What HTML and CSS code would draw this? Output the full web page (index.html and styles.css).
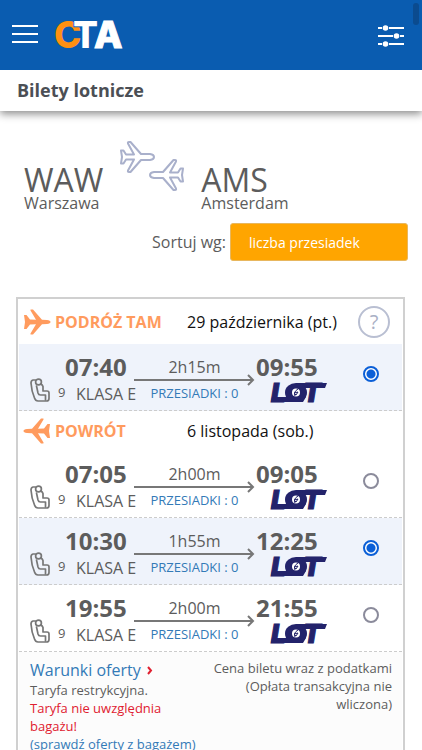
FILE: index.html
```html
<!DOCTYPE html>
<html lang="pl">
<head>
<meta charset="utf-8">
<meta name="viewport" content="width=device-width, initial-scale=1">
<title>Bilety lotnicze</title>
<link rel="stylesheet" href="styles.css">
</head>
<body>
<svg class="sprite" aria-hidden="true">
  <symbol id="plane-outline" viewBox="0 0 36 32">
    <path d="M2 9.500h2.500l2.500 4h8L9 2.500Q8.500 1 10 1h1.500L22 13h9q4 .5 4 3t-4 3h-9L11.500 31H10q-1.500 0-1-1.500L15 18.500H7l-2.500 4H2L3 16z" fill="none" stroke="#a9b0cb" stroke-width="2" stroke-linejoin="round"/>
  </symbol>
  <symbol id="plane-solid" viewBox="0 0 28 26">
    <path d="M1 6h2.500L7 10.500l6 .3L7.500 1.500Q7 .5 8 .5h2L19 10.800l5 .2q3.500.5 3.500 2T24 15l-5 .2L10 25.500H8q-1 0-.5-1L13 15.200l-6 .3L3.500 20H1l1-7z" fill="#ff9b5e"/>
  </symbol>
  <symbol id="seat" viewBox="0 0 20 24">
    <g fill="none" stroke="#777" stroke-width="1.700" stroke-linejoin="round" stroke-linecap="round">
      <path d="M5.500 2H3Q1 2.500 1 5q.5 8 3.500 15 1 3 3.500 3h8.500q2.500 0 2.500-2.500V15q0-2-2-2h-4V8.500Q12.500 7 11 6"/>
      <circle cx="8.500" cy="4" r="2.900"/>
      <path d="M6.500 8 8 15q.5 2 2.500 2h5v5"/>
    </g>
  </symbol>
</svg>

<header class="topbar">
  <button class="icon-button" type="button" aria-label="Menu">
    <svg width="28" height="20" viewBox="0 0 28 20"><path d="M1 2h26M1 10h26M1 18h26" stroke="#fff" stroke-width="2"/></svg>
  </button>
  <a class="brand" href="#" aria-label="CTA">
    <svg width="72" height="48" viewBox="0 0 72 48" font-family="Inter, sans-serif" font-weight="800" font-size="37">
      <text x="-1" y="38" fill="#ff9012">C</text>
      <text x="18" y="38" fill="#fff" stroke="#0a5cb0" stroke-width="2" paint-order="stroke">T</text>
      <text x="39" y="38" fill="#fff" stroke="#fff" stroke-width="1">A</text>
    </svg>
  </a>
  <button class="icon-button filters" type="button" aria-label="Filtry">
    <svg width="28" height="22" viewBox="0 0 28 22" fill="#fff" stroke="#fff" stroke-width="2">
      <path d="M1 3h4m7 0h15M1 11h15m7 0h4M1 19h4m7 0h15"/>
      <circle cx="8.500" cy="3" r="1.800"/><circle cx="19.500" cy="11" r="1.800"/><circle cx="8.500" cy="19" r="1.800"/>
    </svg>
  </button>
  <span class="scroll-thumb"></span>
</header>
<h1 class="page-title">Bilety lotnicze</h1>

<main>
  <section class="route">
    <div class="airport"><span class="code">WAW</span><span class="city">Warszawa</span></div>
    <svg class="route-planes" width="66" height="50" viewBox="0 0 66 50" aria-hidden="true">
      <use href="#plane-outline" x="0" y="0" width="36" height="32"/>
      <use href="#plane-outline" x="0" y="0" width="36" height="32" transform="translate(66 18) scale(-1 1)"/>
    </svg>
    <div class="airport"><span class="code">AMS</span><span class="city">Amsterdam</span></div>
  </section>

  <div class="sort">
    <label for="sort">Sortuj wg:</label>
    <select id="sort"><option>liczba przesiadek</option></select>
  </div>

  <section class="offer">
    <div class="leg-head outbound">
      <svg class="plane" width="28" height="26" aria-hidden="true"><use href="#plane-solid"/></svg>
      <h2>PODRÓŻ TAM</h2>
      <span class="date">29 października (pt.)</span>
      <button class="help" type="button" aria-label="Pomoc">?</button>
    </div>
    <label class="flight selected">
      <span class="depart"><b class="time">07:40</b><svg class="seat" width="20" height="24"><use href="#seat"/></svg><span class="seats">9</span><span class="class">KLASA E</span></span>
      <span class="duration"><span class="length">2h15m</span><svg class="arrow" viewBox="0 0 121 12" height="12"><path d="M0 6h119M114 1l5 5-5 5"/></svg><span class="stops">PRZESIADKI : 0</span></span>
      <span class="arrive"><b class="time">09:55</b><svg class="lot" width="58" height="22" viewBox="0 0 58 22" role="img" aria-label="LOT"><text x="1" y="20">L</text><text x="33" y="20">T</text><path d="M2 15h34l-3 5H1zM26 1h31l-2 5H26z"/><ellipse cx="26" cy="10.500" rx="11" ry="9.500"/><circle class="disc" cx="26" cy="10.500" r="4"/><path class="crane" d="M28 7q-5 3-3 7M24 11l4-1-2 3z"/></svg></span>
      <input type="radio" name="outbound" checked>
    </label>
    <div class="leg-head">
      <svg class="plane back" width="28" height="26" aria-hidden="true"><use href="#plane-solid"/></svg>
      <h2>POWRÓT</h2>
      <span class="date">6 listopada (sob.)</span>
    </div>
    <label class="flight">
      <span class="depart"><b class="time">07:05</b><svg class="seat" width="20" height="24"><use href="#seat"/></svg><span class="seats">9</span><span class="class">KLASA E</span></span>
      <span class="duration"><span class="length">2h00m</span><svg class="arrow" viewBox="0 0 121 12" height="12"><path d="M0 6h119M114 1l5 5-5 5"/></svg><span class="stops">PRZESIADKI : 0</span></span>
      <span class="arrive"><b class="time">09:05</b><svg class="lot" width="58" height="22" viewBox="0 0 58 22" role="img" aria-label="LOT"><text x="1" y="20">L</text><text x="33" y="20">T</text><path d="M2 15h34l-3 5H1zM26 1h31l-2 5H26z"/><ellipse cx="26" cy="10.500" rx="11" ry="9.500"/><circle class="disc" cx="26" cy="10.500" r="4"/><path class="crane" d="M28 7q-5 3-3 7M24 11l4-1-2 3z"/></svg></span>
      <input type="radio" name="return">
    </label>
    <label class="flight selected">
      <span class="depart"><b class="time">10:30</b><svg class="seat" width="20" height="24"><use href="#seat"/></svg><span class="seats">9</span><span class="class">KLASA E</span></span>
      <span class="duration"><span class="length">1h55m</span><svg class="arrow" viewBox="0 0 121 12" height="12"><path d="M0 6h119M114 1l5 5-5 5"/></svg><span class="stops">PRZESIADKI : 0</span></span>
      <span class="arrive"><b class="time">12:25</b><svg class="lot" width="58" height="22" viewBox="0 0 58 22" role="img" aria-label="LOT"><text x="1" y="20">L</text><text x="33" y="20">T</text><path d="M2 15h34l-3 5H1zM26 1h31l-2 5H26z"/><ellipse cx="26" cy="10.500" rx="11" ry="9.500"/><circle class="disc" cx="26" cy="10.500" r="4"/><path class="crane" d="M28 7q-5 3-3 7M24 11l4-1-2 3z"/></svg></span>
      <input type="radio" name="return" checked>
    </label>
    <label class="flight">
      <span class="depart"><b class="time">19:55</b><svg class="seat" width="20" height="24"><use href="#seat"/></svg><span class="seats">9</span><span class="class">KLASA E</span></span>
      <span class="duration"><span class="length">2h00m</span><svg class="arrow" viewBox="0 0 121 12" height="12"><path d="M0 6h119M114 1l5 5-5 5"/></svg><span class="stops">PRZESIADKI : 0</span></span>
      <span class="arrive"><b class="time">21:55</b><svg class="lot" width="58" height="22" viewBox="0 0 58 22" role="img" aria-label="LOT"><text x="1" y="20">L</text><text x="33" y="20">T</text><path d="M2 15h34l-3 5H1zM26 1h31l-2 5H26z"/><ellipse cx="26" cy="10.500" rx="11" ry="9.500"/><circle class="disc" cx="26" cy="10.500" r="4"/><path class="crane" d="M28 7q-5 3-3 7M24 11l4-1-2 3z"/></svg></span>
      <input type="radio" name="return">
    </label>
    <div class="terms">
      <div class="conditions">
        <a class="terms-link" href="#">Warunki oferty <svg width="6" height="9" viewBox="0 0 6 9"><path d="M1 1l3 3.500L1 8" fill="none" stroke="#e02030" stroke-width="2"/></svg></a>
        <p>Taryfa restrykcyjna.</p>
        <p class="warning">Taryfa nie uwzględnia bagażu!</p>
        <a href="#">(sprawdź oferty z bagażem)</a>
      </div>
      <p class="price-note">Cena biletu wraz z podatkami (Opłata transakcyjna nie wliczona)</p>
    </div>
  </section>
</main>
</body>
</html>
```
FILE: styles.css
```css
* { box-sizing: border-box; }
html { scrollbar-width: none; }
body {
  margin: 0;
  background: #fff;
  color: #5c5c5c;
  font-family: "Open Sans", "Noto Sans", sans-serif;
  font-size: 16px;
}
h1, h2, p { margin: 0; }
a { color: #337ab7; text-decoration: none; }
svg { display: block; flex: none; }
.sprite { position: absolute; width: 0; height: 0; }

.topbar {
  position: relative;
  display: flex;
  align-items: center;
  gap: 16px;
  height: 70px;
  padding: 0 17px 2px 11px;
  background: #0a5cb0;
}
.icon-button { padding: 0; border: 0; background: none; }
.filters { margin-left: auto; padding-top: 4px; }
.scroll-thumb {
  position: absolute;
  top: 3px;
  right: 3px;
  width: 6px;
  height: 22px;
  border-radius: 3px;
  background: #0b4b8f;
}
.page-title {
  padding: 0 17px;
  color: #4b4f55;
  font-size: 18px;
  line-height: 41px;
  box-shadow: 0 3px 8px rgba(0, 0, 0, .45);
}

.route {
  display: flex;
  align-items: flex-start;
  gap: 16px;
  padding: 30px 24px 0;
}
.airport { display: flex; flex-direction: column; padding-top: 24px; }
.code { font-size: 32px; line-height: 30px; }
.city { line-height: 16px; }

.sort {
  display: flex;
  justify-content: flex-end;
  align-items: center;
  gap: 4px;
  padding: 12px 14px 0;
}
.sort select {
  appearance: none;
  width: 178px;
  height: 38px;
  padding: 0 18px;
  border: 1px solid #e8b75e;
  border-radius: 3px;
  background: #ffa500;
  color: #fff;
  font: 14px "Open Sans", sans-serif;
}

.offer {
  margin: 36px 17px 0 16px;
  padding: 0 1px;
  border: 2px solid #d0d0d0;
}
.leg-head {
  display: grid;
  grid-template-columns: 32px 132px 1fr auto;
  align-items: center;
  height: 40px;
  padding: 0 12px 0 4px;
}
.outbound { height: 45px; }
.leg-head h2 { color: #ff9b5e; font-size: 16px; }
.back { transform: scaleX(-1); }
.date { color: #111; }
.help {
  width: 32px;
  height: 32px;
  padding: 0;
  border: 2px solid #b9bfd2;
  border-radius: 50%;
  background: #fff;
  color: #a9b0c5;
  font: 20px "Open Sans", sans-serif;
}

.flight {
  display: grid;
  grid-template-columns: 115px 1fr 103px 44px;
  height: 67px;
  padding-top: 8px;
  border-bottom: 1px dashed #ccc;
}
.selected { background: #eff3fb; }
.time { font-size: 24px; line-height: 30px; }
.depart {
  display: grid;
  grid-template-columns: 28px 18px 1fr;
  grid-template-rows: 30px 24px;
  padding-left: 11px;
}
.depart .time { grid-column: 1 / -1; padding-left: 35px; }
.seat { margin-top: -4px; }
.seats { font-size: 13px; line-height: 20px; }
.class { line-height: 24px; white-space: nowrap; }
.duration { display: flex; flex-direction: column; align-items: center; }
.length { line-height: 22px; padding-top: 4px; }
.arrow {
  width: 100%;
  height: 12px;
  margin-top: -4px;
  fill: none;
  stroke: #777;
  stroke-width: 2;
}
.stops { color: #337ab7; font-size: 13px; line-height: 14px; }
.arrive { display: flex; flex-direction: column; padding-left: 1px; }
.lot {
  margin-left: 14px;
  overflow: visible;
  fill: #23236b;
  font: italic 900 26px Inter, Roboto, sans-serif;
}
.lot text { stroke: #23236b; stroke-width: 1; }
.lot .disc { fill: #fff; }
.lot .crane { fill: none; stroke: #23236b; }
.flight input {
  appearance: none;
  width: 16px;
  height: 16px;
  margin: 14px 0 0 5px;
  border: 2px solid #8b8b9b;
  border-radius: 50%;
  background: #fff;
}
.flight input:checked {
  border-color: #0b5fd7;
  background: radial-gradient(circle, #0b5fd7 0 4px, #fff 5px);
}

.terms {
  display: flex;
  justify-content: space-between;
  padding: 7px 10px 8px 11px;
  background: #fcfcfc;
  font-size: 13px;
  line-height: 18px;
}
.conditions { width: 164px; }
.conditions > a { display: block; white-space: nowrap; }
.conditions .terms-link {
  display: flex;
  align-items: center;
  gap: 6px;
  font-size: 16px;
  line-height: 22px;
}
.warning { color: #e02030; }
.price-note { width: 184px; text-align: right; }
```
